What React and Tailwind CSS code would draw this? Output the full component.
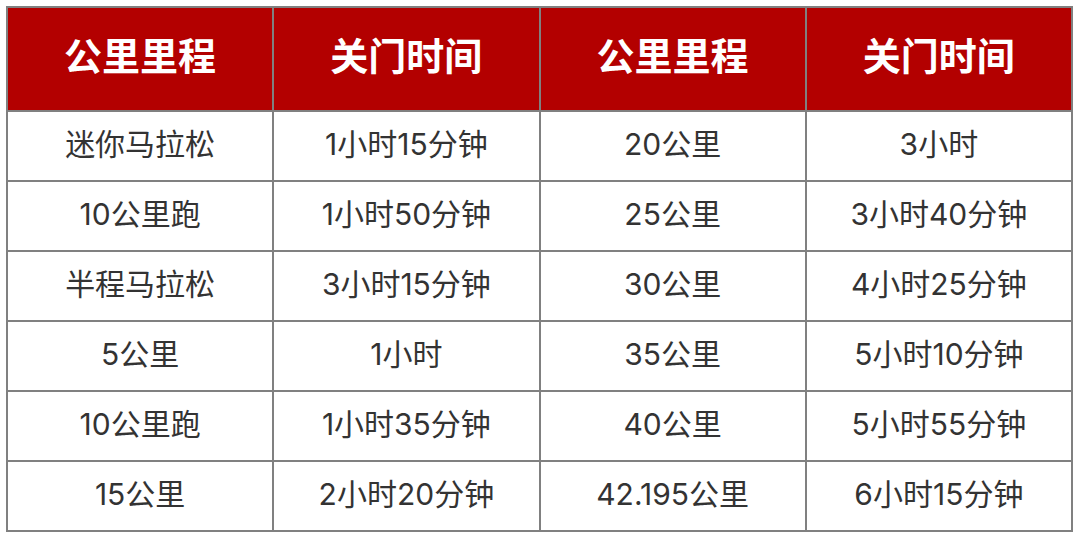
import React from "react";

const rows = [
  ["迷你马拉松", "1小时15分钟", "20公里", "3小时"],
  ["10公里跑", "1小时50分钟", "25公里", "3小时40分钟"],
  ["半程马拉松", "3小时15分钟", "30公里", "4小时25分钟"],
  ["5公里", "1小时", "35公里", "5小时10分钟"],
  ["10公里跑", "1小时35分钟", "40公里", "5小时55分钟"],
  ["15公里", "2小时20分钟", "42.195公里", "6小时15分钟"],
];

const headers = ["公里里程", "关门时间", "公里里程", "关门时间"];

export default function App() {
  return (
    <div
      className="w-[1080px] h-[539px] bg-white pl-[6px] pt-[6px]"
      style={{ fontFamily: '"Inter", "Noto Sans CJK SC", sans-serif' }}
    >
      <table className="w-[1067px] table-fixed border-collapse border-2 border-[#808080]">
        <thead>
          <tr className="h-[104px] bg-[#b30000]">
            {headers.map((h, i) => (
              <th
                key={i}
                className="border-2 border-[#808080] p-0 pb-[6px] text-center text-[38px] font-bold text-white leading-none"
              >
                {h}
              </th>
            ))}
          </tr>
        </thead>
        <tbody>
          {rows.map((r, i) => (
            <tr key={i} className="h-[70px]">
              {r.map((c, j) => (
                <td
                  key={j}
                  className="border-2 border-[#808080] p-0 pb-[4px] text-center text-[30px] text-[#333333] leading-none"
                >
                  {c}
                </td>
              ))}
            </tr>
          ))}
        </tbody>
      </table>
    </div>
  );
}
